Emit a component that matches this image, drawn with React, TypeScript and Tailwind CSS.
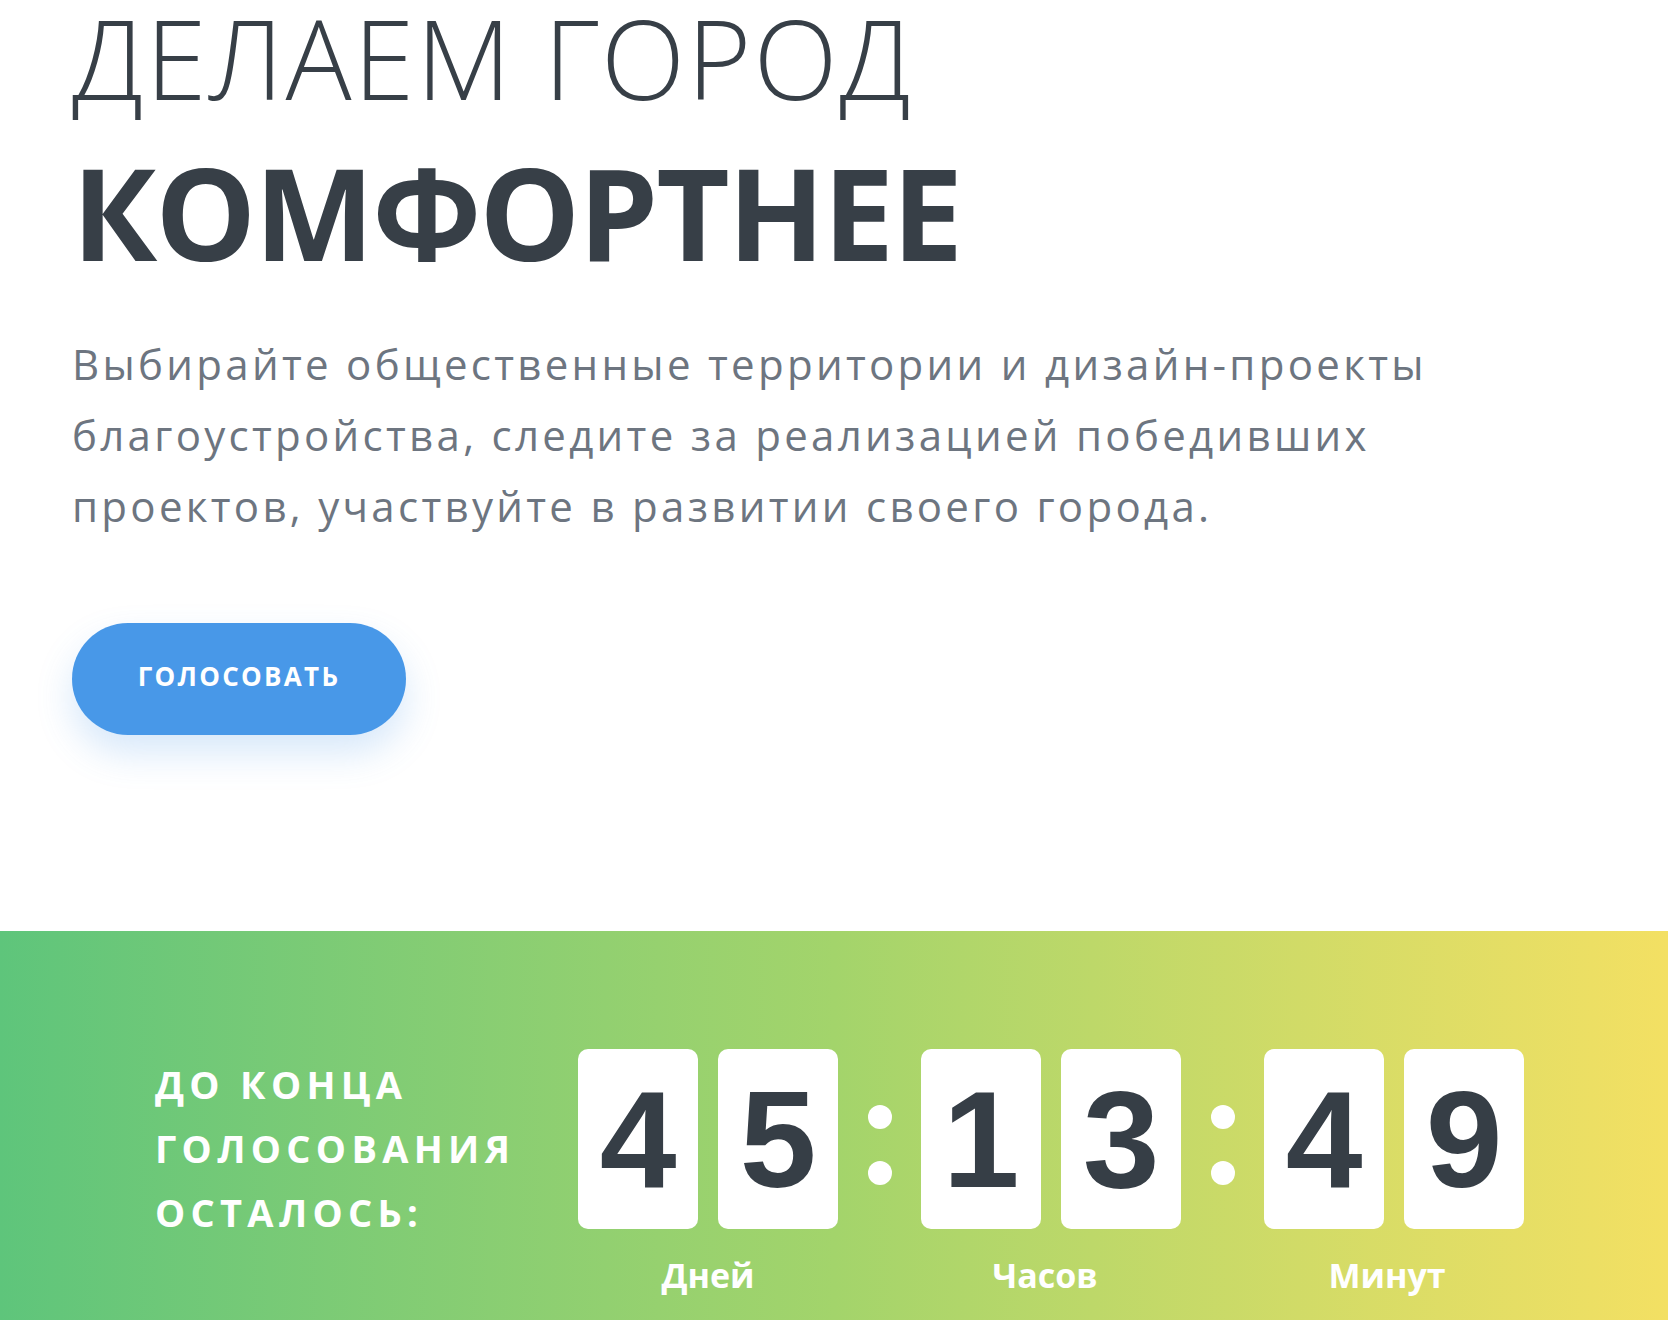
import React from "react";

function Card({ d }: { d: string }) {
  return (
    <div className="flex h-[180px] w-[120px] items-center justify-center rounded-[10px] bg-white">
      <span className="font-['Liberation_Sans',Arial,sans-serif] text-[138px] font-bold leading-none text-[#363e46]">
        {d}
      </span>
    </div>
  );
}

function Group({ digits, label, shift }: { digits: string; label: string; shift?: string }) {
  return (
    <div className="flex flex-col items-center">
      <div className="flex gap-[20px]">
        <Card d={digits[0]} />
        <Card d={digits[1]} />
      </div>
      <div className={"mt-[26px] text-[34px] font-bold leading-[40px] text-white " + (shift ?? "")}>{label}</div>
    </div>
  );
}

function Colon() {
  return (
    <div className="flex h-[180px] w-[83px] flex-col items-center gap-[32px] pt-[56px]">
      <div className="h-[24px] w-[24px] rounded-full bg-white" />
      <div className="h-[24px] w-[24px] rounded-full bg-white" />
    </div>
  );
}

export default function App() {
  return (
    <div className="w-full bg-white font-['Open_Sans','Noto_Sans',sans-serif]">
      <section className="px-[72px] pt-[1px]">
        <h1 className="text-[#373f47]">
          <div className="whitespace-nowrap text-[110px] font-light leading-[112px] tracking-[2px]">ДЕЛАЕМ ГОРОД</div>
          <div className="-mt-[3px] whitespace-nowrap text-[127px] font-bold leading-[203px] tracking-[-2px]">КОМФОРТНЕЕ</div>
        </h1>
        <p className="mt-[15px] whitespace-nowrap text-[42px] leading-[71px] tracking-[3.3px] text-[#6d7580]">
          Выбирайте общественные территории и дизайн-проекты
          <br />
          благоустройства, следите за реализацией победивших
          <br />
          проектов, участвуйте в развитии своего города.
        </p>
        <button className="mt-[82px] flex h-[112px] w-[334px] items-center justify-center rounded-full bg-[#4898e8] pb-[6px] text-[26px] font-bold tracking-[2.3px] text-white shadow-[0_18px_36px_rgba(72,152,232,0.22)]">
          ГОЛОСОВАТЬ
        </button>
      </section>
      <section className="mt-[196px] min-h-[389px] bg-linear-to-r from-[#5ec57b] via-[#a3d46b] to-[#f3e063] pl-[155px] pt-[118px]">
        <div className="flex items-start">
          <div className="w-[423px] whitespace-nowrap pt-[3px] text-[38px] font-bold leading-[64px] tracking-[5.3px] text-white">
            ДО КОНЦА
            <br />
            ГОЛОСОВАНИЯ
            <br />
            ОСТАЛОСЬ:
          </div>
          <Group digits="45" label="Дней" />
          <Colon />
          <Group digits="13" label="Часов" shift="-translate-x-[6px]" />
          <Colon />
          <Group digits="49" label="Минут" shift="-translate-x-[7px]" />
        </div>
      </section>
    </div>
  );
}
